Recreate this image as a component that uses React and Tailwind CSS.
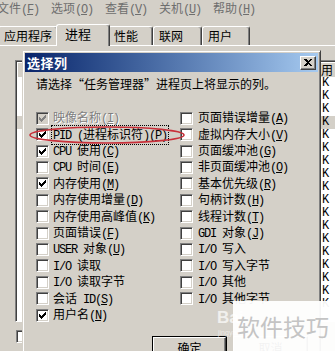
import React from 'react'

const mono = "font-['Liberation_Mono',monospace] text-[12px] tracking-[-1.2px]"

function Txt({ s }) {
  return s
    .split(/([\x20-\x7e]+)/)
    .filter(Boolean)
    .map((p, i) =>
      /^[\x20-\x7e]+$/.test(p) ? (
        <span key={i} className={mono}>{p}</span>
      ) : (
        <span key={i}>{p}</span>
      )
    )
}

function Label({ t, k }) {
  return (
    <span className="whitespace-pre">
      <Txt s={t} />
      {k && (
        <span className={mono}>
          (<span className="underline underline-offset-1">{k}</span>)
        </span>
      )}
    </span>
  )
}

function Tick({ color = '#000' }) {
  return (
    <svg width="7" height="7" viewBox="0 0 7 7" shapeRendering="crispEdges" fill={color}>
      <rect x="6" y="0" width="1" height="1" />
      <rect x="5" y="1" width="2" height="1" />
      <rect x="0" y="2" width="1" height="1" />
      <rect x="4" y="2" width="3" height="1" />
      <rect x="0" y="3" width="2" height="1" />
      <rect x="3" y="3" width="3" height="1" />
      <rect x="0" y="4" width="5" height="1" />
      <rect x="1" y="5" width="3" height="1" />
      <rect x="2" y="6" width="1" height="1" />
    </svg>
  )
}

function Box({ on, disabled }) {
  return (
    <span
      className={`w-[13px] h-[13px] shrink-0 flex items-center justify-center border border-t-[#808080] border-l-[#808080] border-r-white border-b-white shadow-[inset_1px_1px_#404040,inset_-1px_-1px_#d4d0c8] ${
        disabled ? 'bg-[#d4d0c8]' : 'bg-white'
      }`}
    >
      {on && <Tick color={disabled ? '#808080' : '#000'} />}
    </span>
  )
}

const left = [
  { t: '映像名称', k: 'I', on: true, disabled: true },
  { t: 'PID (进程标识符)', k: 'P', on: true, focus: true },
  { t: 'CPU 使用', k: 'C', on: true },
  { t: 'CPU 时间', k: 'E' },
  { t: '内存使用', k: 'M', on: true },
  { t: '内存使用增量', k: 'D' },
  { t: '内存使用高峰值', k: 'K' },
  { t: '页面错误', k: 'F' },
  { t: 'USER 对象', k: 'U' },
  { t: 'I/O 读取' },
  { t: 'I/O 读取字节' },
  { t: '会话 ID', k: 'S' },
  { t: '用户名', k: 'N', on: true },
]

const right = [
  { t: '页面错误增量', k: 'A' },
  { t: '虚拟内存大小', k: 'V' },
  { t: '页面缓冲池', k: 'G' },
  { t: '非页面缓冲池', k: 'O' },
  { t: '基本优先级', k: 'R' },
  { t: '句柄计数', k: 'H' },
  { t: '线程计数', k: 'T' },
  { t: 'GDI 对象', k: 'J' },
  { t: 'I/O 写入' },
  { t: 'I/O 写入字节' },
  { t: 'I/O 其他' },
  { t: 'I/O 其他字节' },
]

function Row({ item, gap }) {
  return (
    <div className={`h-[16.42px] flex items-center ${gap}`}>
      <Box on={item.on} disabled={item.disabled} />
      <span
        className={
          item.disabled
            ? 'text-[#808080] [text-shadow:1px_1px_0_#fff]'
            : item.focus
            ? 'outline-1 outline-dotted outline-black outline-offset-[1px]'
            : ''
        }
      >
        <Label t={item.t} k={item.k} />
      </span>
    </div>
  )
}

function Btn({ children, def }) {
  return (
    <div className={`w-[75px] h-[23px] ${def ? 'border border-black' : ''}`}>
      <div className="w-full h-full flex items-center justify-center border border-t-white border-l-white border-r-[#404040] border-b-[#404040] shadow-[inset_-1px_-1px_#808080]">
        {children}
      </div>
    </div>
  )
}

const tabs = [
  { t: '应用程序', w: 'w-[60px] ml-[-2px]' },
  { t: '进程', sel: true },
  { t: '性能', w: 'w-[45px]' },
  { t: '联网', w: 'w-[49px]' },
  { t: '用户', w: 'w-[48px]' },
]

export default function App() {
  return (
    <div
      lang="zh-CN"
      className="relative w-[335px] h-[351px] overflow-hidden bg-[#d4d0c8] text-black text-[12px] leading-[14px] font-['Noto_Sans_CJK_SC',sans-serif]"
    >
      {/* menu bar */}
      <div className="h-[18px] flex items-center ml-[-3px] text-[#6e6e6e]">
        {[
          ['文件', 'F'],
          ['选项', 'O'],
          ['查看', 'V'],
          ['关机', 'U'],
          ['帮助', 'H'],
        ].map(([t, k]) => (
          <div key={t} className="w-[54px]">
            <Label t={t} k={k} />
          </div>
        ))}
      </div>

      {/* tabs */}
      <div className="h-[27px] flex items-end">
        {tabs.map((tab) =>
          tab.sel ? (
            <div
              key={tab.t}
              className="relative z-10 w-[54px] mx-[-2px] h-[22px] mb-[-1px] bg-[#d4d0c8] border-t border-l border-white border-r border-r-[#404040] rounded-t-[3px] shadow-[inset_-1px_0_#808080] pl-[8px] pt-[2px] text-[13px]"
            >
              {tab.t}
            </div>
          ) : (
            <div
              key={tab.t}
              className={`${tab.w} h-[19px] border-t border-l border-white border-r border-r-[#404040] rounded-t-[3px] shadow-[inset_-1px_0_#808080] pl-[5px] pt-[2px] text-[12px]`}
            >
              {tab.t}
            </div>
          )
        )}
      </div>

      {/* tab page */}
      <div className="border-t border-white h-[306px] pt-[14px]">
        <div className="ml-[15px] w-[330px] h-[262px] border border-t-[#808080] border-l-[#808080] border-r-white border-b-white shadow-[inset_1px_1px_#404040] bg-white pl-[1px] pt-[1px] overflow-hidden">
          <div className="h-[15px] flex justify-end bg-[#d4d0c8] border-t border-l border-white">
            <div className="w-[25px] border-l border-white pl-[1px] leading-[14px]">用</div>
          </div>
          {Array.from({ length: 18 }).map((_, i) => (
            <div key={i} className={`h-[13px] flex justify-end ${i === 3 ? 'bg-[#d4d0c8]' : ''}`}>
              <div className={`w-[25px] pl-[3px] leading-[13px] ${mono}`}>K</div>
            </div>
          ))}
        </div>
        <div className="mt-[8px] ml-[16px]">
          <Box />
        </div>
      </div>

      {/* dialog */}
      <div className="absolute left-[22px] top-[50px] w-[299px] h-[330px] bg-[#d4d0c8] border border-t-[#d4d0c8] border-l-[#d4d0c8] border-r-[#404040] border-b-[#404040] shadow-[inset_1px_1px_#fff,inset_-1px_-1px_#808080] p-[2px]">
        <div className="h-[19px] flex items-center justify-between bg-linear-to-r from-[#0a246a] to-[#a6caf0] pl-[2px] pr-[2px]">
          <span className="text-white font-bold text-[13px] tracking-[0.5px]">选择列</span>
          <div className="w-[16px] h-[14px] bg-[#d4d0c8] flex items-center justify-center border border-t-white border-l-white border-r-[#404040] border-b-[#404040] shadow-[inset_-1px_-1px_#808080]">
            <svg width="8" height="7" viewBox="0 0 8 7" shapeRendering="crispEdges">
              <path d="M0 0h2l2 2 2-2h2l-3 3.5 3 3.5h-2l-2-2-2 2h-2l3-3.5z" fill="#000" />
            </svg>
          </div>
        </div>

        <div className="pl-[11px] pt-[5px]">
          <div className="whitespace-nowrap">请选择“任务管理器”进程页上将显示的列。</div>

          <div className="mt-[19px] grid grid-cols-[144px_1fr]">
            <div className="flex flex-col">
              {left.map((it) => (
                <Row key={it.t} item={it} gap="gap-[4px]" />
              ))}
            </div>
            <div className="flex flex-col">
              {right.map((it) => (
                <Row key={it.t} item={it} gap="gap-[5px]" />
              ))}
            </div>
          </div>
        </div>

        <div className="mt-[13px] flex justify-end gap-[6px] pr-[10px]">
          <Btn def>确定</Btn>
          <Btn>取消</Btn>
        </div>
      </div>

      {/* red ellipse annotation */}
      <svg className="absolute left-[27px] top-[124px]" width="160" height="22" viewBox="0 0 160 22">
        <ellipse cx="80" cy="11" rx="77" ry="8" fill="none" stroke="#c8303a" strokeWidth="1.6" />
      </svg>

      {/* watermark */}
      <div className="absolute left-[217px] top-[309px] text-[17px] leading-[17px] font-bold text-white/70 font-['Liberation_Sans',sans-serif]">
        Bai
      </div>
      <div className="absolute left-[218px] top-[329px] text-[7px] leading-[7px] text-white/60 font-['Liberation_Sans',sans-serif]">
        jingyan
      </div>
      <div className="absolute left-[233px] top-[301px] w-[102px] h-[50px] bg-white/95 flex items-center pl-[4px] text-[23px] leading-[24px] text-[#c4c4c4]">
        软件技巧
      </div>
    </div>
  )
}
